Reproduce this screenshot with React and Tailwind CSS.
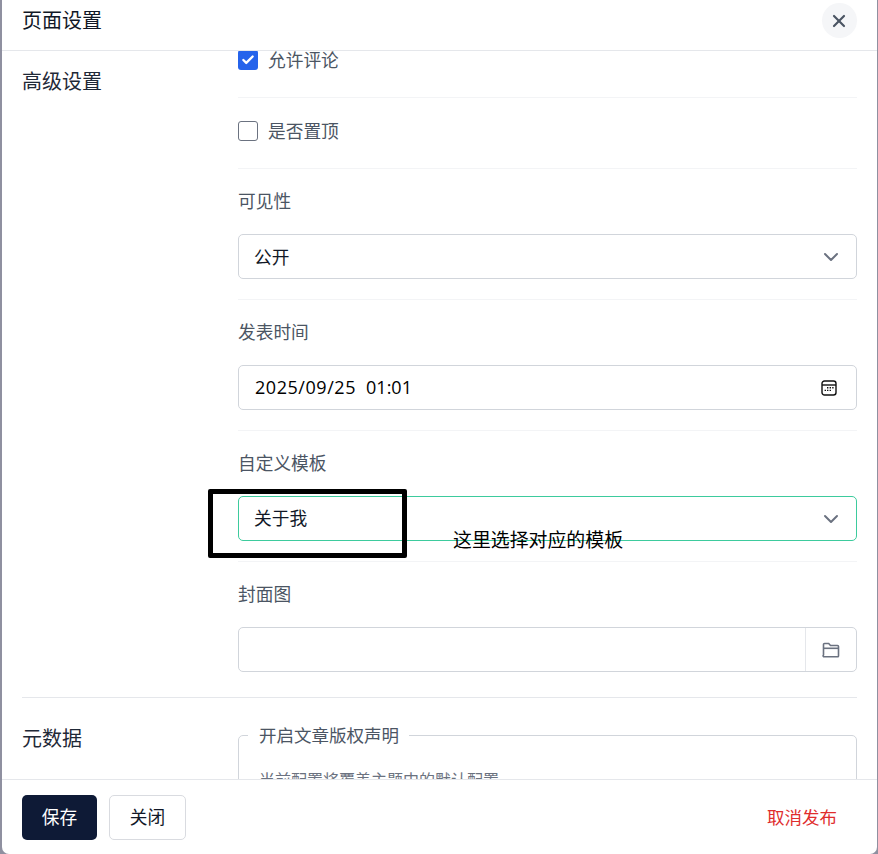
import React from "react";
import { X, ChevronDown, Check } from "lucide-react";

function Divider() {
  return <div className="h-px bg-[#f3f4f6]" />;
}

function CheckRow({ checked, label, top }) {
  return (
    <div className={top ? "flex items-center gap-[10px] pb-[27px]" : "flex items-center gap-[10px] pt-[23px] pb-[27px]"}>
      {checked ? (
        <span className="flex h-5 w-5 items-center justify-center rounded-[3px] bg-[#2563eb] text-white">
          <Check size={14} strokeWidth={4} />
        </span>
      ) : (
        <span className="h-5 w-5 rounded-[3px] border border-[#6b7280] bg-white" />
      )}
      <span className="h-5 text-[17.7px] leading-[18px] text-[#4b5563]">{label}</span>
    </div>
  );
}

function Field({ label, children }) {
  return (
    <div className="pt-[19px] pb-5">
      <div className="mb-[22px] h-6 text-[17.7px] leading-6 text-[#4b5563]">{label}</div>
      {children}
    </div>
  );
}

function SelectBox({ value, focus }) {
  return (
    <div
      className={
        focus
          ? "flex h-[45px] items-center justify-between rounded-[5px] border border-[#3dcb9d] pl-[15px] pr-[13px]"
          : "flex h-[45px] items-center justify-between rounded-[5px] border border-[#d1d5db] pl-[15px] pr-[13px]"
      }
    >
      <span className={focus ? "pb-[2px] text-[17.7px] text-[#111827]" : "text-[17.7px] text-[#111827]"}>{value}</span>
      <ChevronDown size={24} strokeWidth={2} className="text-[#6b7280]" />
    </div>
  );
}

function CalendarIcon() {
  return (
    <svg width="16" height="16" viewBox="0 0 16 16" fill="none">
      <rect x="1" y="1" width="14" height="14" rx="2.5" stroke="#111" strokeWidth="1.4" />
      <path d="M1 5h14" stroke="#111" strokeWidth="1.4" />
      <path d="M6 7.8h1.4M8.6 7.8H10M11.2 7.8h1.4M3.6 10.4H5M6 10.4h1.4M8.6 10.4H10" stroke="#111" strokeWidth="1.4" />
    </svg>
  );
}

function FolderIcon() {
  return (
    <svg width="18" height="16" viewBox="0 0 18 16" fill="none" stroke="#6b7280" strokeWidth="1.6">
      <path d="M1.5 13V2.5a1 1 0 0 1 1-1h4.2l1.8 2h7a1 1 0 0 1 1 1V14a.7.7 0 0 1-.7.7H2.5a1 1 0 0 1-1-1.7z" />
      <path d="M1.5 6.3h15" />
    </svg>
  );
}

export default function App() {
  return (
    <div className="relative h-[854px] w-[878px] overflow-hidden bg-[#8f90a0] font-['Noto_Sans_CJK_SC','Noto_Sans',sans-serif]">
      <div className="ml-[2px] flex h-[854px] w-[875px] flex-col overflow-hidden rounded-b-[7px] bg-white">
        <header className="flex h-[51px] shrink-0 items-center justify-between border-b border-[#e5e7eb] pb-[9px] pl-5 pr-5">
          <h1 className="pb-[2px] text-[20px] leading-7 text-[#111827]">页面设置</h1>
          <button className="flex h-[35px] w-[35px] items-center justify-center rounded-full bg-[#f5f6f8] text-[#4b5563]">
            <X size={20} strokeWidth={2.6} className="-ml-[2px]" />
          </button>
        </header>

        <main className="min-h-0 flex-1 overflow-hidden px-5">
          <section className="flex border-b border-[#e5e7eb] pb-[5px]">
            <h2 className="w-[216px] shrink-0 pt-4 text-[20px] leading-7 text-[#1f2937]">高级设置</h2>
            <div className="w-[619px] -mt-px">
              <CheckRow checked top label="允许评论" />
              <Divider />
              <CheckRow label="是否置顶" />
              <Divider />
              <Field label="可见性">
                <SelectBox value="公开" />
              </Field>
              <Divider />
              <Field label="发表时间">
                <div className="flex h-[45px] items-center justify-between rounded-[5px] border border-[#d1d5db] pl-4 pr-[19px]">
                  <span className="flex gap-[10px] font-['Open_Sans',sans-serif] text-[18px] text-black">
                    <span className="tracking-[0.55px]">2025/09/25</span>
                    <span>01:01</span>
                  </span>
                  <CalendarIcon />
                </div>
              </Field>
              <Divider />
              <Field label="自定义模板">
                <SelectBox value="关于我" focus />
              </Field>
              <Divider />
              <Field label="封面图">
                <div className="flex h-[45px] items-stretch justify-end rounded-[5px] border border-[#d1d5db]">
                  <div className="flex w-[51px] items-center justify-center border-l border-[#e5e7eb]">
                    <FolderIcon />
                  </div>
                </div>
              </Field>
            </div>
          </section>

          <section className="flex pt-[26px]">
            <h2 className="w-[216px] shrink-0 text-[20px] leading-7 text-[#1f2937]">元数据</h2>
            <fieldset className="-mt-px h-[120px] w-[619px] rounded-[5px] border border-[#d1d5db] pl-5 pr-5">
              <legend className="-ml-[11px] pl-[11px] pr-[10px] text-[17.5px] leading-6 text-[#4b5563]">开启文章版权声明</legend>
              <p className="mt-5 text-[16px] leading-6 text-[#6b7280]">当前配置将覆盖主题中的默认配置</p>
            </fieldset>
          </section>
        </main>

        <footer className="flex h-[75px] shrink-0 items-start justify-between border-t border-[#e5e7eb] pl-5 pr-5 pt-[15px]">
          <div className="flex gap-3">
            <button className="h-[45px] w-[75px] rounded-[5px] bg-[#0e1a36] pb-[2px] text-[17.7px] text-white">保存</button>
            <button className="h-[45px] w-[77px] rounded-[5px] border border-[#d9dbe0] bg-white pb-[2px] text-[17.7px] text-[#111827]">关闭</button>
          </div>
          <button className="h-[45px] px-5 text-[17.5px] text-[#e02d2d]">取消发布</button>
        </footer>
      </div>

      <div className="absolute left-[208px] top-[489px] h-[69px] w-[199px] rounded-[2px] border-[5px] border-black" />
      <div className="absolute left-[453px] top-[525px] text-[18.9px] leading-7 text-black">这里选择对应的模板</div>
    </div>
  );
}
